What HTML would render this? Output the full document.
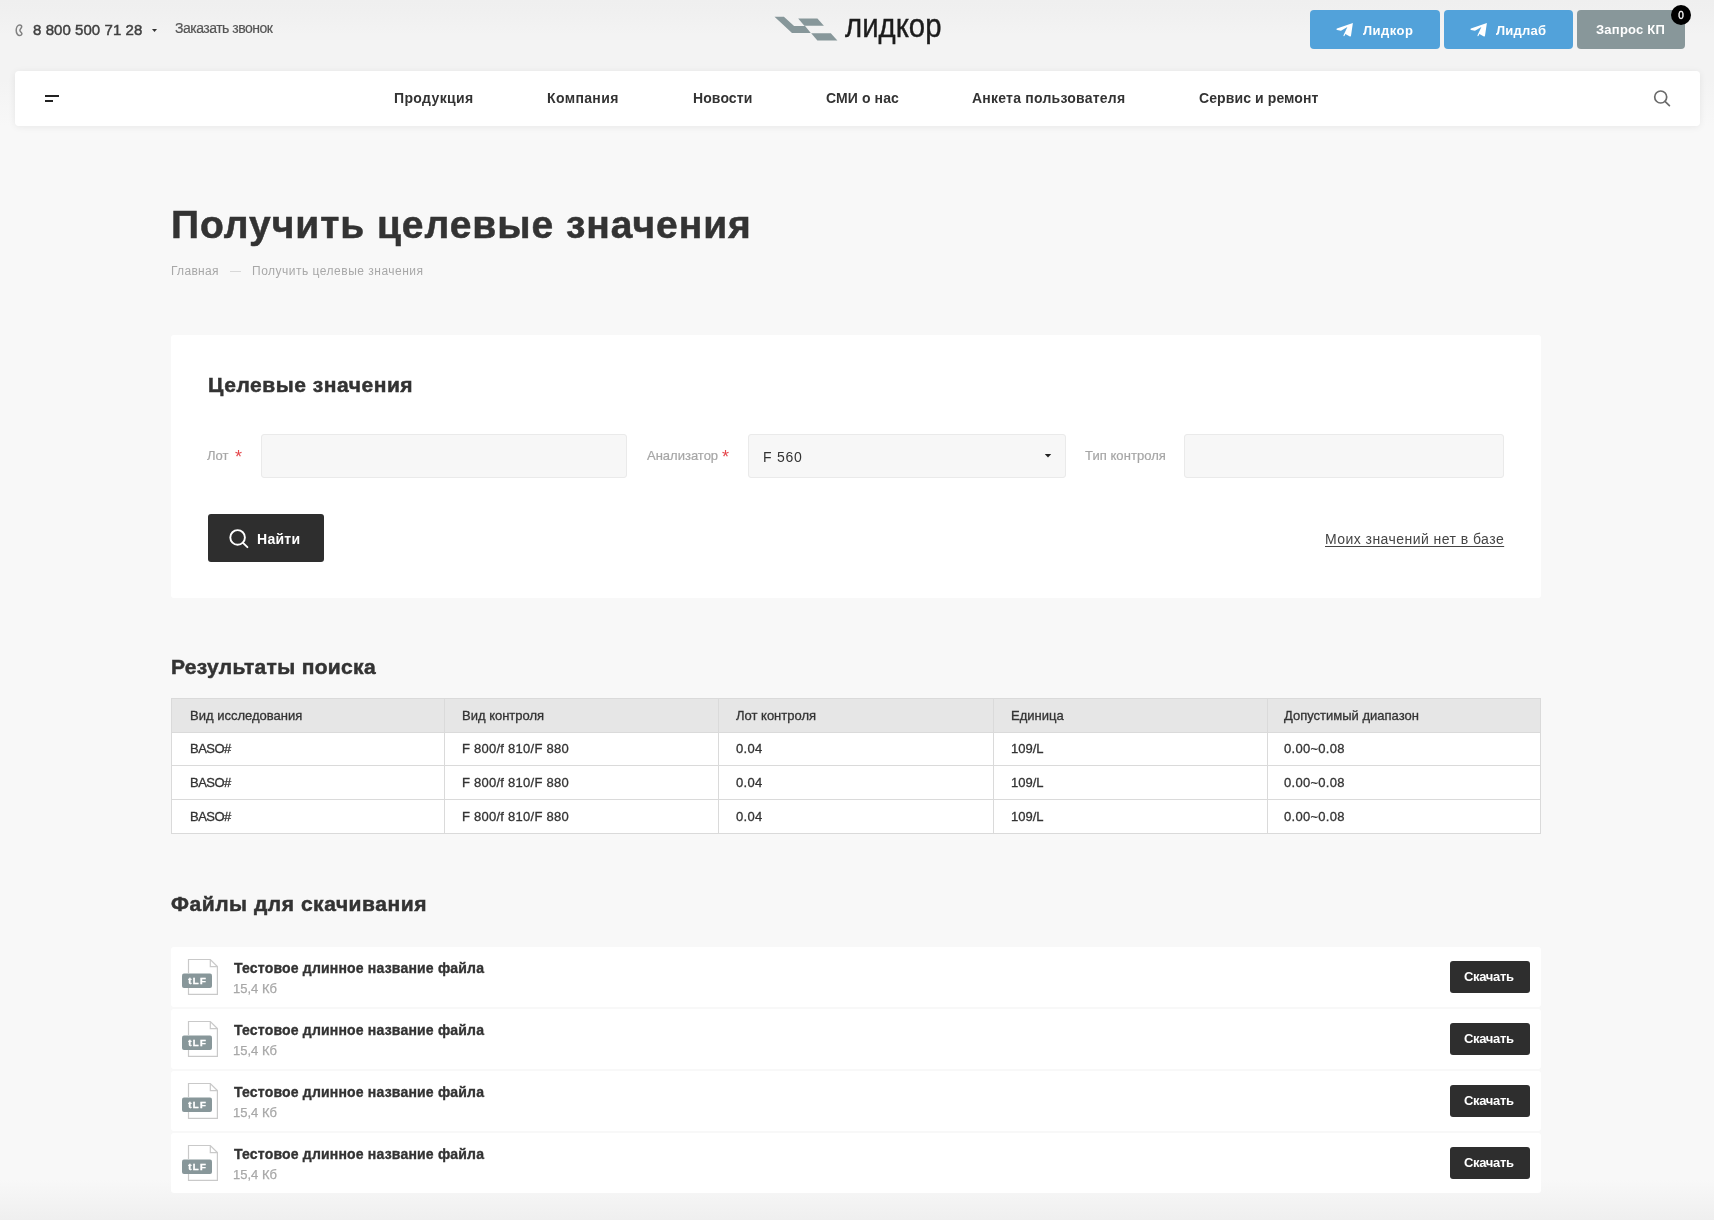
<!DOCTYPE html>
<html lang="ru">
<head>
<meta charset="utf-8">
<title>Получить целевые значения</title>
<style>
*{margin:0;padding:0;box-sizing:border-box}
html,body{width:1714px;height:1220px;overflow:hidden}
body{font-family:"Liberation Sans",sans-serif;color:#333;position:relative;
 background:linear-gradient(to bottom,#efefef 0px,#f0f0f0 12px,#f3f3f3 35px,#f3f3f3 80px,#f8f8f8 126px,#f8f8f8 1180px,#efefef 1220px)}
.a{position:absolute;white-space:nowrap;line-height:1}
.b{font-weight:bold}
.btn-tg{position:absolute;top:10px;height:39px;background:#52a2da;border-radius:4px}
.nav{position:absolute;left:15px;top:71px;width:1685px;height:55px;background:#fff;border-radius:4px;box-shadow:0 1px 7px rgba(0,0,0,.07)}
.card{position:absolute;left:171px;top:335px;width:1370px;height:263px;background:#fff;border-radius:3px}
.inp{position:absolute;top:434px;height:44px;background:#f7f7f7;border:1px solid #eaeaea;border-radius:3px}
.lbl{color:#a6a6a6;font-size:13px;-webkit-text-stroke:0.2px #a6a6a6}
.req{color:#e5484d;font-size:18px}
.tbl{position:absolute;left:171px;top:698px;width:1370px;height:136px;background:#fff;border:1px solid #dadada}
.th{position:absolute;left:0;top:0;width:1368px;height:34px;background:#e6e6e6;border-bottom:1px solid #dadada}
.hl{position:absolute;left:0;width:1368px;height:1px;background:#dadada}
.vl{position:absolute;top:0;width:1px;height:134px;background:#dadada}
.td{font-size:13px;color:#333;-webkit-text-stroke:0.3px #333}
.frow{position:absolute;left:171px;width:1370px;height:60px;background:#fff;border-radius:3px}
.dl{position:absolute;left:1279px;top:14px;width:80px;height:32px;background:#2e2e2e;border-radius:3px}
</style>
</head>
<body>
<div style="position:absolute;left:0;top:0;width:1714px;height:1220px;will-change:transform">
<!-- top header -->
<svg class="a" style="left:14px;top:23px" width="10" height="14" viewBox="0 0 10 14"><path d="M5.8 1.9 C3.6 1.9 2.2 4.5 2.2 7.2 C2.2 10.2 3.8 12.6 5.6 12.6 C6.8 12.6 8 11.6 7.9 10.6 C7.8 9.4 5.9 8.8 5.9 7.2 C5.9 5.8 7.7 5.2 7.7 3.7 C7.7 2.6 6.8 1.9 5.8 1.9 Z" fill="none" stroke="#808080" stroke-width="1.5"/></svg>
<div class="a" style="left:33px;top:22px;font-size:15px;color:#404040;letter-spacing:0.06px;-webkit-text-stroke:0.45px #404040">8 800 500 71 28</div>
<svg class="a" style="left:151px;top:28px" width="7" height="5" viewBox="0 0 7 5"><path d="M1 1 L6 1 L3.5 4 Z" fill="#333"/></svg>
<div class="a" style="left:175px;top:21px;font-size:14px;color:#555;letter-spacing:-0.5px;-webkit-text-stroke:0.2px #555">Заказать звонок</div>

<!-- logo -->
<svg class="a" style="left:770px;top:12px" width="70" height="32" viewBox="770 12 70 32">
 <polygon points="774.5,16.7 783.9,16.7 794.1,26.1 805.1,26.1 810.8,33.0 792.0,33.0" fill="#87979a"/>
 <polygon points="798.2,18.5 817.4,18.5 823.9,25.7 804.3,25.7" fill="#87979a"/>
 <polygon points="811.2,33.2 830.8,33.2 837.4,40.4 817.4,40.4" fill="#87979a"/>
</svg>
<div class="a" style="left:845px;top:9px;font-size:33px;color:#1c1c1c;-webkit-text-stroke:0.4px #1c1c1c;transform:scaleX(0.89);transform-origin:0 0">лидкор</div>

<!-- right buttons -->
<div class="btn-tg" style="left:1310px;width:130px"></div>
<svg class="a" style="left:1330px;top:18px" width="30" height="24" viewBox="0 0 30 24"><path d="M22.9 4.9 L6.9 10.4 Q5.6 11.3 7.1 11.9 L11 12.8 L17.4 9.1 L13.5 17.2 Q13.3 18.6 14.4 18.1 L15.4 16 L19.9 18.5 Q20.9 18.9 21 17.8 Z" fill="#fff"/></svg>
<div class="a b" style="left:1363px;top:24px;font-size:13px;color:#fff;letter-spacing:0.47px">Лидкор</div>
<div class="btn-tg" style="left:1444px;width:129px"></div>
<svg class="a" style="left:1464px;top:18px" width="30" height="24" viewBox="0 0 30 24"><path d="M22.9 4.9 L6.9 10.4 Q5.6 11.3 7.1 11.9 L11 12.8 L17.4 9.1 L13.5 17.2 Q13.3 18.6 14.4 18.1 L15.4 16 L19.9 18.5 Q20.9 18.9 21 17.8 Z" fill="#fff"/></svg>
<div class="a b" style="left:1496px;top:24px;font-size:13px;color:#fff;letter-spacing:0.23px">Лидлаб</div>
<div class="a" style="left:1577px;top:10px;width:108px;height:39px;background:#88979a;border-radius:4px"></div>
<div class="a b" style="left:1596px;top:23px;font-size:13px;color:#fff;letter-spacing:0.22px">Запрос КП</div>
<div class="a" style="left:1671px;top:5px;width:20px;height:20px;border-radius:50%;background:#000"></div>
<div class="a" style="left:1671px;top:10.5px;width:20px;text-align:center;font-size:10px;color:#fff;-webkit-text-stroke:0.3px #fff">0</div>

<!-- nav -->
<div class="nav"></div>
<div class="a" style="left:45px;top:95px;width:14px;height:2px;background:#222"></div>
<div class="a" style="left:45px;top:100px;width:8px;height:2px;background:#222"></div>
<div class="a b" style="left:394px;top:91px;font-size:14px;color:#333;letter-spacing:0.37px">Продукция</div>
<div class="a b" style="left:547px;top:91px;font-size:14px;color:#333;letter-spacing:0.37px">Компания</div>
<div class="a b" style="left:693px;top:91px;font-size:14px;color:#333;letter-spacing:0.1px">Новости</div>
<div class="a b" style="left:826px;top:91px;font-size:14px;color:#333;letter-spacing:0.1px">СМИ о нас</div>
<div class="a b" style="left:972px;top:91px;font-size:14px;color:#333;letter-spacing:0.23px">Анкета пользователя</div>
<div class="a b" style="left:1199px;top:91px;font-size:14px;color:#333;letter-spacing:0.1px">Сервис и ремонт</div>
<svg class="a" style="left:1650px;top:86px" width="24" height="24" viewBox="0 0 24 24"><circle cx="10.7" cy="11" r="6" fill="none" stroke="#6a6a6a" stroke-width="1.7"/><path d="M15 15.3 L19.4 19.7" stroke="#6a6a6a" stroke-width="1.7" stroke-linecap="round"/></svg>

<!-- title -->
<div class="a b" style="left:171px;top:205px;font-size:39px;color:#333;letter-spacing:0.95px;-webkit-text-stroke:0.5px #333">Получить целевые значения</div>
<div class="a" style="left:171px;top:265px;font-size:12px;color:#a8a8a8;letter-spacing:0.3px">Главная</div>
<div class="a" style="left:230px;top:271px;width:11px;height:1px;background:#d8d8d8"></div>
<div class="a" style="left:252px;top:265px;font-size:12px;color:#a8a8a8;letter-spacing:0.5px">Получить целевые значения</div>

<!-- form card -->
<div class="card"></div>
<div class="a b" style="left:208px;top:374px;font-size:21px;color:#333;letter-spacing:0.55px;-webkit-text-stroke:0.5px #333">Целевые значения</div>
<div class="a lbl" style="left:207px;top:449px">Лот</div>
<div class="a req" style="left:235px;top:448px">*</div>
<div class="inp" style="left:261px;width:366px"></div>
<div class="a lbl" style="left:647px;top:449px">Анализатор</div>
<div class="a req" style="left:722px;top:448px">*</div>
<div class="inp" style="left:748px;width:318px"></div>
<div class="a" style="left:763px;top:450px;font-size:14px;color:#333;letter-spacing:0.75px">F 560</div>
<svg class="a" style="left:1044px;top:453px" width="8" height="5" viewBox="0 0 8 5"><path d="M0.8 1 L7.2 1 L4 4.4 Z" fill="#222"/></svg>
<div class="a lbl" style="left:1085px;top:449px;letter-spacing:0.05px">Тип контроля</div>
<div class="inp" style="left:1184px;width:320px"></div>
<div class="a" style="left:208px;top:514px;width:116px;height:48px;background:#2e2e2e;border-radius:3px"></div>
<svg class="a" style="left:226px;top:526px" width="26" height="26" viewBox="0 0 26 26"><circle cx="11.6" cy="11.4" r="7.3" fill="none" stroke="#fff" stroke-width="1.9"/><path d="M17 16.8 L21.4 21.2" stroke="#fff" stroke-width="1.9" stroke-linecap="round"/></svg>
<div class="a b" style="left:257px;top:532px;font-size:14px;color:#fff;letter-spacing:0.29px">Найти</div>
<div class="a" style="left:1325px;top:532px;font-size:14px;color:#444;letter-spacing:0.45px;text-decoration:underline;text-underline-offset:1.5px">Моих значений нет в базе</div>

<!-- results -->
<div class="a b" style="left:171px;top:656px;font-size:21px;color:#333;letter-spacing:0.34px;-webkit-text-stroke:0.5px #333">Результаты поиска</div>
<div class="tbl">
 <div class="th"></div>
 <div class="hl" style="top:66px"></div>
 <div class="hl" style="top:100px"></div>
 <div class="vl" style="left:272px"></div>
 <div class="vl" style="left:546px"></div>
 <div class="vl" style="left:821px"></div>
 <div class="vl" style="left:1095px"></div>
</div>
<div class="a td" style="left:190px;top:709px">Вид исследования</div>
<div class="a td" style="left:462px;top:709px">Вид контроля</div>
<div class="a td" style="left:736px;top:709px">Лот контроля</div>
<div class="a td" style="left:1011px;top:709px">Единица</div>
<div class="a td" style="left:1284px;top:709px">Допустимый диапазон</div>

<div class="a td" style="left:190px;top:742px;letter-spacing:-0.5px">BASO#</div>
<div class="a td" style="left:462px;top:742px;letter-spacing:0.25px">F 800/f 810/F 880</div>
<div class="a td" style="left:736px;top:742px;letter-spacing:0.3px">0.04</div>
<div class="a td" style="left:1011px;top:742px">109/L</div>
<div class="a td" style="left:1284px;top:742px;letter-spacing:0.29px">0.00~0.08</div>

<div class="a td" style="left:190px;top:776px;letter-spacing:-0.5px">BASO#</div>
<div class="a td" style="left:462px;top:776px;letter-spacing:0.25px">F 800/f 810/F 880</div>
<div class="a td" style="left:736px;top:776px;letter-spacing:0.3px">0.04</div>
<div class="a td" style="left:1011px;top:776px">109/L</div>
<div class="a td" style="left:1284px;top:776px;letter-spacing:0.29px">0.00~0.08</div>

<div class="a td" style="left:190px;top:810px;letter-spacing:-0.5px">BASO#</div>
<div class="a td" style="left:462px;top:810px;letter-spacing:0.25px">F 800/f 810/F 880</div>
<div class="a td" style="left:736px;top:810px;letter-spacing:0.3px">0.04</div>
<div class="a td" style="left:1011px;top:810px">109/L</div>
<div class="a td" style="left:1284px;top:810px;letter-spacing:0.29px">0.00~0.08</div>

<!-- files -->
<div class="a b" style="left:171px;top:893px;font-size:21px;color:#333;letter-spacing:0.55px;-webkit-text-stroke:0.5px #333">Файлы для скачивания</div>
<!--FILES-->
<div class="frow" style="top:947px"></div>
<svg class="a" style="left:180px;top:957px" width="40" height="40" viewBox="0 0 40 40"><path d="M8.5 16 V2.5 H30.3 L37.4 9.6 V37.4 H8.5 V30 M30.3 2.5 V9.6 H37.4" fill="none" stroke="#c9c9c9" stroke-width="1.2"/><rect x="2" y="16.5" width="30" height="14.5" rx="2" fill="#88979a"/><text x="17.7" y="27.2" text-anchor="middle" font-family="Liberation Sans" font-weight="bold" font-size="9.5" fill="#fff" stroke="#fff" stroke-width="0.4" letter-spacing="1.3">tLF</text></svg>
<div class="a b" style="left:234px;top:961px;font-size:14px;color:#333;letter-spacing:0.19px;-webkit-text-stroke:0.35px #333">Тестовое длинное название файла</div>
<div class="a" style="left:233px;top:982px;font-size:13px;color:#a8a8a8;-webkit-text-stroke:0.25px #a8a8a8">15,4 Кб</div>
<div class="a" style="left:1450px;top:961px;width:80px;height:32px;background:#2e2e2e;border-radius:3px"></div>
<div class="a b" style="left:1464px;top:970px;font-size:13px;color:#fff;letter-spacing:-0.32px">Скачать</div>
<div class="frow" style="top:1009px"></div>
<svg class="a" style="left:180px;top:1019px" width="40" height="40" viewBox="0 0 40 40"><path d="M8.5 16 V2.5 H30.3 L37.4 9.6 V37.4 H8.5 V30 M30.3 2.5 V9.6 H37.4" fill="none" stroke="#c9c9c9" stroke-width="1.2"/><rect x="2" y="16.5" width="30" height="14.5" rx="2" fill="#88979a"/><text x="17.7" y="27.2" text-anchor="middle" font-family="Liberation Sans" font-weight="bold" font-size="9.5" fill="#fff" stroke="#fff" stroke-width="0.4" letter-spacing="1.3">tLF</text></svg>
<div class="a b" style="left:234px;top:1023px;font-size:14px;color:#333;letter-spacing:0.19px;-webkit-text-stroke:0.35px #333">Тестовое длинное название файла</div>
<div class="a" style="left:233px;top:1044px;font-size:13px;color:#a8a8a8;-webkit-text-stroke:0.25px #a8a8a8">15,4 Кб</div>
<div class="a" style="left:1450px;top:1023px;width:80px;height:32px;background:#2e2e2e;border-radius:3px"></div>
<div class="a b" style="left:1464px;top:1032px;font-size:13px;color:#fff;letter-spacing:-0.32px">Скачать</div>
<div class="frow" style="top:1071px"></div>
<svg class="a" style="left:180px;top:1081px" width="40" height="40" viewBox="0 0 40 40"><path d="M8.5 16 V2.5 H30.3 L37.4 9.6 V37.4 H8.5 V30 M30.3 2.5 V9.6 H37.4" fill="none" stroke="#c9c9c9" stroke-width="1.2"/><rect x="2" y="16.5" width="30" height="14.5" rx="2" fill="#88979a"/><text x="17.7" y="27.2" text-anchor="middle" font-family="Liberation Sans" font-weight="bold" font-size="9.5" fill="#fff" stroke="#fff" stroke-width="0.4" letter-spacing="1.3">tLF</text></svg>
<div class="a b" style="left:234px;top:1085px;font-size:14px;color:#333;letter-spacing:0.19px;-webkit-text-stroke:0.35px #333">Тестовое длинное название файла</div>
<div class="a" style="left:233px;top:1106px;font-size:13px;color:#a8a8a8;-webkit-text-stroke:0.25px #a8a8a8">15,4 Кб</div>
<div class="a" style="left:1450px;top:1085px;width:80px;height:32px;background:#2e2e2e;border-radius:3px"></div>
<div class="a b" style="left:1464px;top:1094px;font-size:13px;color:#fff;letter-spacing:-0.32px">Скачать</div>
<div class="frow" style="top:1133px"></div>
<svg class="a" style="left:180px;top:1143px" width="40" height="40" viewBox="0 0 40 40"><path d="M8.5 16 V2.5 H30.3 L37.4 9.6 V37.4 H8.5 V30 M30.3 2.5 V9.6 H37.4" fill="none" stroke="#c9c9c9" stroke-width="1.2"/><rect x="2" y="16.5" width="30" height="14.5" rx="2" fill="#88979a"/><text x="17.7" y="27.2" text-anchor="middle" font-family="Liberation Sans" font-weight="bold" font-size="9.5" fill="#fff" stroke="#fff" stroke-width="0.4" letter-spacing="1.3">tLF</text></svg>
<div class="a b" style="left:234px;top:1147px;font-size:14px;color:#333;letter-spacing:0.19px;-webkit-text-stroke:0.35px #333">Тестовое длинное название файла</div>
<div class="a" style="left:233px;top:1168px;font-size:13px;color:#a8a8a8;-webkit-text-stroke:0.25px #a8a8a8">15,4 Кб</div>
<div class="a" style="left:1450px;top:1147px;width:80px;height:32px;background:#2e2e2e;border-radius:3px"></div>
<div class="a b" style="left:1464px;top:1156px;font-size:13px;color:#fff;letter-spacing:-0.32px">Скачать</div>
<!--/FILES-->
</div>
</body>
</html>
